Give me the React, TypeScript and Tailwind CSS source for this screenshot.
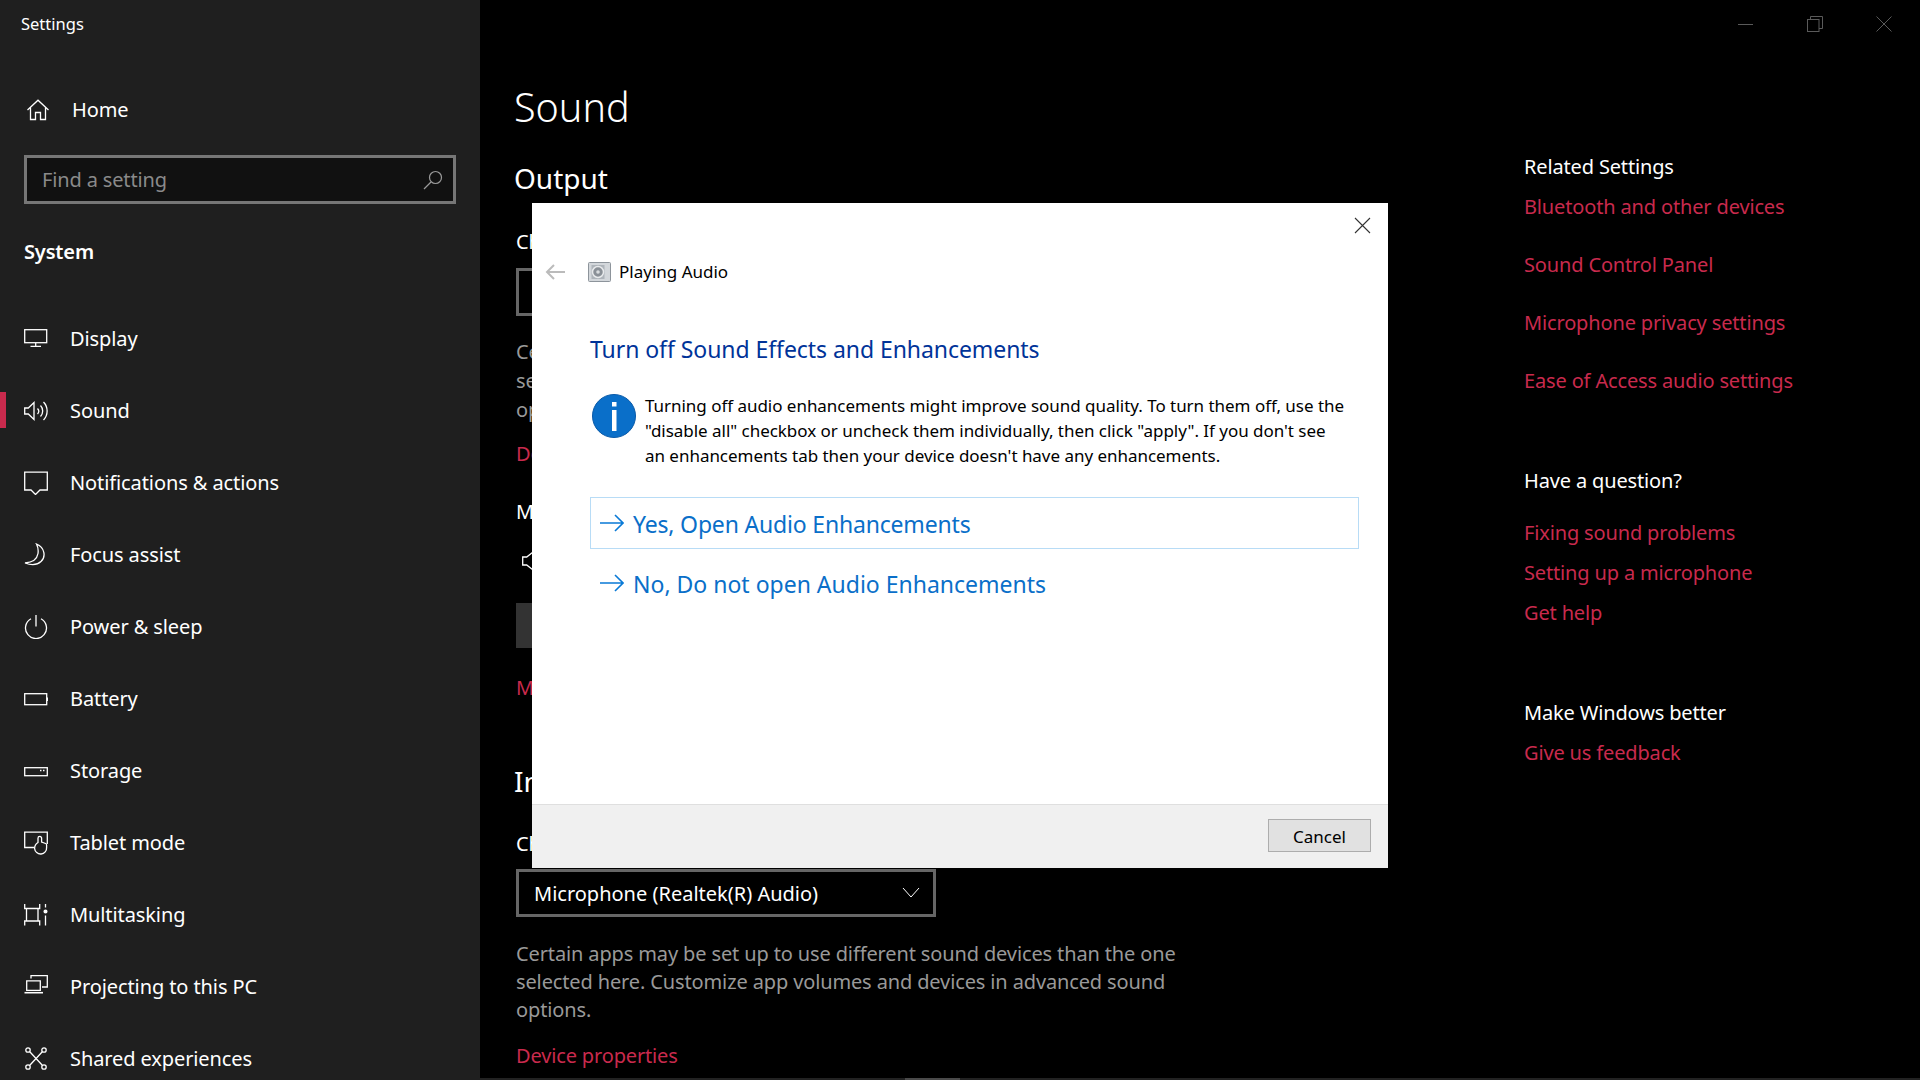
const F = "font-['Noto_Sans',sans-serif]";

const S = { fill: "none", stroke: "#fff", strokeWidth: 1.3 } as const;

const icons: Record<string, React.ReactNode> = {
  display: (
    <g {...S}>
      <rect x="0.7" y="2.7" width="22" height="13" />
      <path d="M11.7 16v3M6.5 19.3h10.5" />
    </g>
  ),
  sound: (
    <g {...S}>
      <path d="M0.7 9h3.6L10 3.500v17L4.300 15H0.7z" />
      <path d="M13.500 9.500a4 4 0 0 1 0 5.500M16.500 6.500a8 8 0 0 1 0 11M19.500 3a13 13 0 0 1 0 18" />
    </g>
  ),
  notif: (
    <g {...S}>
      <path d="M0.7 1.200h22.600v17.800H16l-4.500 4.500-4.500-4.500H0.700z" />
    </g>
  ),
  focus: (
    <g {...S}>
      <path d="M12.500 1c8.500 3.500 9.500 13 4.500 17.500-4 3.700-10.500 3.500-16 1.500 6.500-.5 12-3.500 13-9.500 .5-3.500 0-6.500-1.500-9.500z" />
    </g>
  ),
  power: (
    <g {...S}>
      <path d="M7 3.800a10.500 10.500 0 1 0 10 0M12 0v11.500" />
    </g>
  ),
  battery: (
    <g {...S}>
      <rect x="0.7" y="6.700" width="22" height="11" />
      <path d="M23.500 10.500v3.500" />
    </g>
  ),
  storage: (
    <g {...S}>
      <rect x="0.7" y="8.700" width="22.600" height="8" />
      <path d="M16 11.500h1.500M19 11.500h1.500" />
    </g>
  ),
  tablet: (
    <g {...S}>
      <path d="M10 16.500H0.700V1.200h22.600V13" />
      <path d="M14 11V7.200a1.800 1.800 0 0 1 3.600 0V11l4 1.500a1.500 1.500 0 0 1 1 1.500v2.500a6 6 0 0 1-12 1c0-3 1-4.500 3.400-6z" />
    </g>
  ),
  multi: (
    <g {...S}>
      <path d="M0.700 1v4.500h15V1M0.700 22.500v-4.500h15v4.500M2.500 5.500v12.500M14 5.500v12.500" />
      <circle cx="21.500" cy="8.500" r="1.400" fill="#fff" />
      <path d="M21.500 1v3.500M21.500 12.500v10" />
    </g>
  ),
  project: (
    <g {...S}>
      <path d="M7 3.500V0.700h16.300v11.300H18M2.700 5.800h13.600v9.500H2.700z" />
      <path d="M0.500 17.700h18.500" strokeWidth="1.600" />
    </g>
  ),
  shared: (
    <g {...S}>
      <circle cx="4" cy="3" r="2.200" />
      <circle cx="20" cy="3" r="2.200" />
      <circle cx="4" cy="20" r="2.200" />
      <circle cx="20" cy="20" r="2.200" />
      <path d="M5.800 4.800l12.500 13.400M18.300 4.800L5.800 18.200" />
    </g>
  ),
};

const nav = [
  ["display", "Display", false],
  ["sound", "Sound", true],
  ["notif", "Notifications & actions", false],
  ["focus", "Focus assist", false],
  ["power", "Power & sleep", false],
  ["battery", "Battery", false],
  ["storage", "Storage", false],
  ["tablet", "Tablet mode", false],
  ["multi", "Multitasking", false],
  ["project", "Projecting to this PC", false],
  ["shared", "Shared experiences", false],
] as const;

function Row({ icon, label, active }: { icon: string; label: string; active: boolean }) {
  return (
    <div className="relative flex h-[72px] shrink-0 items-center pl-6">
      {active && <div className="absolute left-0 top-[17px] h-9 w-1.5 bg-[#c92a4d]" />}
      <svg width="24" height="24" viewBox="0 0 24 24" className="shrink-0">
        {icons[icon]}
      </svg>
      <span className="ml-[22px] text-[20px] leading-7 tracking-[-0.1px] text-white">{label}</span>
    </div>
  );
}

function Link({ children, className = "" }: { children: React.ReactNode; className?: string }) {
  return <div className={`h-7 text-[20px] leading-7 tracking-[-0.15px] text-[#c92a4d] ${className}`}>{children}</div>;
}

function Head({ children, className = "" }: { children: React.ReactNode; className?: string }) {
  return <div className={`h-7 text-[20px] leading-7 tracking-[-0.15px] text-white ${className}`}>{children}</div>;
}

function Arrow() {
  return (
    <svg width="24" height="18" viewBox="0 0 24 18" className="shrink-0" fill="none" stroke="#0a7ad6" strokeWidth="1.6">
      <path d="M0 9h23M15 1l8 8-8 8" />
    </svg>
  );
}

function Combo({ label, className = "" }: { label: string; className?: string }) {
  return (
    <div className={`flex h-[48px] w-[420px] items-center justify-between border-[3px] border-[#666] pl-[15px] pr-[13px] text-[20px] text-white ${className}`}>
      <span className="translate-y-px">{label}</span>
      <svg width="18" height="12" viewBox="0 0 18 12" fill="none" stroke="#fff" strokeWidth="1">
        <path d="M1 1l8 9 8-9" />
      </svg>
    </div>
  );
}

export default function App() {
  return (
    <div className={`relative flex h-screen w-screen overflow-hidden bg-black ${F}`}>
      <aside className="flex h-full w-[480px] shrink-0 flex-col overflow-hidden bg-[#1f1f1f]">
        <div className="flex h-12 shrink-0 items-center pl-[21px] text-[16.500px] text-white">Settings</div>
        <div className="mt-[38px] flex h-12 shrink-0 items-center pl-[27px]">
          <svg width="22" height="22" viewBox="0 0 22 22" fill="none" stroke="#fff" strokeWidth="1.300">
            <path d="M0.500 11L11 1.200 21.500 11M3.500 8.500V20.500h5v-7h5v7h5V8.500" />
          </svg>
          <span className="ml-[23px] text-[20px] tracking-[-0.1px] text-white">Home</span>
        </div>
        <div className="mt-[21px] ml-6 flex h-[49px] w-[432px] shrink-0 items-center justify-between border-[3px] border-[#767676] bg-[#111] pl-[15px] pr-[10px] text-[20px] tracking-[-0.15px] text-[#8a8a8a]">
          <span>Find a setting</span>
          <svg width="20" height="20" viewBox="0 0 20 20" fill="none" stroke="#9a9a9a" strokeWidth="1.200">
            <circle cx="12.500" cy="7.500" r="6" />
            <path d="M8 12L1 19" />
          </svg>
        </div>
        <div className="mt-[34px] ml-6 h-7 shrink-0 text-[20px] font-semibold leading-7 tracking-[-0.15px] text-white">System</div>
        <div className="mt-[37px] flex flex-col">
          {nav.map(([i, l, a]) => (
            <Row key={l} icon={i} label={l} active={a} />
          ))}
        </div>
      </aside>

      <main className="flex min-w-0 flex-1 flex-col">
        <div className="flex h-12 shrink-0 items-center justify-end">
          <div className="flex h-12 w-[69px] items-center justify-center">
            <div className="h-px w-[15px] bg-[#5a5a5a]" />
          </div>
          <div className="flex h-12 w-[69px] items-center justify-center">
            <svg width="16" height="16" viewBox="0 0 16 16" fill="none" stroke="#5a5a5a">
              <rect x="0.500" y="3.500" width="11.500" height="12" />
              <path d="M3.500 3.500V0.500h12v12h-3.500" />
            </svg>
          </div>
          <div className="flex h-12 w-[69px] items-center justify-center">
            <svg width="16" height="16" viewBox="0 0 16 16" fill="none" stroke="#5a5a5a">
              <path d="M0.500 0.500l15 15M15.500 0.500l-15 15" />
            </svg>
          </div>
          <div className="w-[2px]" />
        </div>

        <div className="flex min-h-0 flex-1">
          <div className="w-[1044px] shrink-0 pl-9">
            <div className="mt-[29px] -ml-[2px] h-[60px] text-[39.500px] font-light leading-[60px] text-white">Sound</div>
            <div className="mt-[21px] -ml-[2px] h-10 text-[28px] leading-10 text-white">Output</div>
            <Head className="mt-[30px]">Choose your output device</Head>
            <Combo label="Speakers (Realtek(R) Audio)" className="mt-3" />
            <p className="mt-[21px] w-[680px] text-[20px] leading-[29px] tracking-[-0.13px] text-[#999]">
              Certain apps may be set up to use different sound devices than the one selected here. Customize app volumes and devices in advanced sound options.
            </p>
            <Link className="mt-4">Device properties</Link>
            <Head className="mt-[30px]">Master volume</Head>
            <svg width="24" height="24" viewBox="0 0 24 24" className="mt-[23px] ml-[4px]">
              <g {...S}>
                <path d="M2.700 8h4L13 3v18l-6.300-5h-4z" />
              </g>
            </svg>
            <div className="mt-[30px] h-[45px] w-[190px] bg-[#333]" />
            <Link className="mt-[26px]">Manage sound devices</Link>
            <div className="mt-[59px] -ml-[2px] h-10 text-[28px] leading-10 text-white">Input</div>
            <Head className="mt-[29px]">Choose your input device</Head>
            <Combo label="Microphone (Realtek(R) Audio)" className="mt-[11px]" />
            <p className="mt-[23px] w-[680px] text-[20px] leading-7 tracking-[-0.13px] text-[#999]">
              Certain apps may be set up to use different sound devices than the one selected here. Customize app volumes and devices in advanced sound options.
            </p>
            <Link className="mt-[18px]">Device properties</Link>
          </div>

          <div className="flex flex-col">
            <Head className="mt-[105px]">Related Settings</Head>
            <Link className="mt-3">Bluetooth and other devices</Link>
            <Link className="mt-[30px]">Sound Control Panel</Link>
            <Link className="mt-[30px]">Microphone privacy settings</Link>
            <Link className="mt-[30px]">Ease of Access audio settings</Link>
            <Head className="mt-[72px]">Have a question?</Head>
            <Link className="mt-6">Fixing sound problems</Link>
            <Link className="mt-3">Setting up a microphone</Link>
            <Link className="mt-3">Get help</Link>
            <Head className="mt-[72px]">Make Windows better</Head>
            <Link className="mt-3">Give us feedback</Link>
          </div>
        </div>
        <div className="absolute bottom-0 left-[480px] right-0 flex h-[2px]">
          <div className="h-full w-[425px] bg-[#222]" />
          <div className="h-full w-[55px] bg-[#4a4a4a]" />
          <div className="h-full flex-1 bg-[#222]" />
        </div>
      </main>

      <div className="absolute left-[532px] top-[203px] flex h-[665px] w-[856px] flex-col bg-white text-black">
        <div className="flex h-[55px] shrink-0 items-start justify-end pr-[17px] pt-[14px]">
          <svg width="17" height="17" viewBox="0 0 17 17" fill="none" stroke="#333" strokeWidth="1.100">
            <path d="M1 1l15 15M16 1L1 16" />
          </svg>
        </div>
        <div className="flex h-[28px] shrink-0 items-center pl-[13px]">
          <svg width="20" height="16" viewBox="0 0 20 16" fill="none" stroke="#bbb" strokeWidth="2">
            <path d="M20 8H2M9 1L2 8l7 7" />
          </svg>
          <svg width="23" height="20" viewBox="0 0 23 20" className="ml-[23px]">
            <rect x="0.500" y="0.500" width="22" height="19" rx="1" fill="#d3d7db" stroke="#8d949b" />
            <rect x="3.500" y="3" width="13" height="14" fill="#aeb4ba" />
            <circle cx="10" cy="10" r="5.500" fill="#8a9097" stroke="#e8eaec" strokeWidth="1.500" />
            <circle cx="10" cy="10" r="1.800" fill="#d8dbde" />
          </svg>
          <span className="ml-2 text-[17px] leading-7">Playing Audio</span>
        </div>
        <div className="mt-[47px] ml-[58px] h-8 shrink-0 text-[23px] leading-8 tracking-[-0.06px] text-[#003399]">Turn off Sound Effects and Enhancements</div>
        <div className="mt-[29px] ml-[60px] flex shrink-0">
          <svg width="44" height="44" viewBox="0 0 44 44" className="shrink-0">
            <circle cx="22" cy="22" r="21.500" fill="#0a6fc9" stroke="#0a5aa8" />
            <rect x="20" y="8" width="4.500" height="4.500" fill="#fff" />
            <rect x="20" y="16" width="4.500" height="21" fill="#fff" />
          </svg>
          <p className="ml-[9px] -mt-[1px] w-[703px] text-[17px] leading-[25px] tracking-[-0.03px]">
            Turning off audio enhancements might improve sound quality. To turn them off, use the "disable all" checkbox or uncheck them individually, then click "apply". If you don't see an enhancements tab then your device doesn't have any enhancements.
          </p>
        </div>
        <div className="mt-[29px] ml-[58px] flex h-[52px] w-[769px] shrink-0 items-center border border-[#b8dcf6] pl-[9px] text-[23px] text-[#0a6fc9]">
          <Arrow />
          <span className="ml-[9px] translate-y-px tracking-[-0.18px]">Yes, Open Audio Enhancements</span>
        </div>
        <div className="mt-2 ml-[58px] flex h-[52px] shrink-0 items-center pl-[10px] text-[23px] text-[#0a6fc9]">
          <Arrow />
          <span className="ml-[9px] translate-y-px">No, Do not open Audio Enhancements</span>
        </div>
        <div className="mt-auto flex h-[64px] shrink-0 items-start justify-end border-t border-[#dfdfdf] bg-[#f0f0f0] pr-[17px] pt-[14px]">
          <div className="flex h-[33px] w-[103px] items-center justify-center border border-[#adadad] bg-[#e1e1e1] text-[17px]">
            <span className="translate-y-px">Cancel</span>
          </div>
        </div>
      </div>
    </div>
  );
}
